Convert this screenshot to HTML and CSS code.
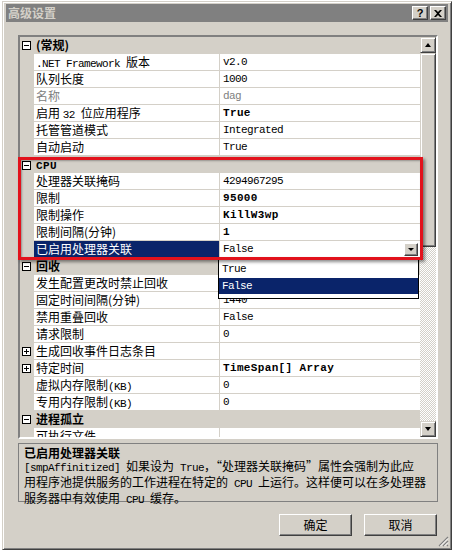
FILE: index.html
```html
<!DOCTYPE html>
<html lang="zh-CN">
<head>
<meta charset="utf-8">
<title>高级设置</title>
<link rel="stylesheet" href="styles.css">
</head>
<body>
<div class="window">
  <div class="titlebar">
    <span class="title">高级设置</span>
    <div class="tbtns">
      <span class="tbtn">?</span>
      <span class="tbtn"><svg width="8" height="7" viewBox="0 0 8 7"><path d="M0 0h2l2 2 2-2h2L5 3.5 8 7H6L4 5 2 7H0l3-3.5z" fill="#000"/></svg></span>
    </div>
  </div>
  <div class="content">
    <div class="grid">
      <div class="rows">
        <div class="row cat"><span class="mg"><span class="exp"></span></span><span class="cn">(常规)</span></div>
        <div class="row"><span class="mg"></span><span class="nm"><span class="m">.NET Framework </span>版本</span><span class="vl m">v2.0</span></div>
        <div class="row"><span class="mg"></span><span class="nm">队列长度</span><span class="vl m">1000</span></div>
        <div class="row dis"><span class="mg"></span><span class="nm">名称</span><span class="vl m">dag</span></div>
        <div class="row"><span class="mg"></span><span class="nm">启用 <span class="m">32 </span>位应用程序</span><span class="vl mb">True</span></div>
        <div class="row"><span class="mg"></span><span class="nm">托管管道模式</span><span class="vl m">Integrated</span></div>
        <div class="row"><span class="mg"></span><span class="nm">自动启动</span><span class="vl m">True</span></div>
        <div class="row cat"><span class="mg"><span class="exp"></span></span><span class="cn"><span class="mb">CPU</span></span></div>
        <div class="row"><span class="mg"></span><span class="nm">处理器关联掩码</span><span class="vl m">4294967295</span></div>
        <div class="row"><span class="mg"></span><span class="nm">限制</span><span class="vl mb">95000</span></div>
        <div class="row"><span class="mg"></span><span class="nm">限制操作</span><span class="vl mb">KillW3wp</span></div>
        <div class="row"><span class="mg"></span><span class="nm">限制间隔(分钟)</span><span class="vl mb">1</span></div>
        <div class="row sel"><span class="mg"></span><span class="nm">已启用处理器关联</span><span class="vl combo"><span class="m">False</span><span class="cbtn"><i class="tri-d"></i></span></span></div>
        <div class="row cat"><span class="mg"><span class="exp"></span></span><span class="cn">回收</span></div>
        <div class="row"><span class="mg"></span><span class="nm">发生配置更改时禁止回收</span><span class="vl m">False</span></div>
        <div class="row"><span class="mg"></span><span class="nm">固定时间间隔(分钟)</span><span class="vl m">1440</span></div>
        <div class="row"><span class="mg"></span><span class="nm">禁用重叠回收</span><span class="vl m">False</span></div>
        <div class="row"><span class="mg"></span><span class="nm">请求限制</span><span class="vl m">0</span></div>
        <div class="row"><span class="mg"><span class="exp plus"></span></span><span class="nm">生成回收事件日志条目</span><span class="vl m"></span></div>
        <div class="row"><span class="mg"><span class="exp plus"></span></span><span class="nm">特定时间</span><span class="vl mb">TimeSpan[] Array</span></div>
        <div class="row"><span class="mg"></span><span class="nm">虚拟内存限制<span class="m">(KB)</span></span><span class="vl m">0</span></div>
        <div class="row"><span class="mg"></span><span class="nm">专用内存限制<span class="m">(KB)</span></span><span class="vl m">0</span></div>
        <div class="row cat"><span class="mg"><span class="exp"></span></span><span class="cn">进程孤立</span></div>
        <div class="row"><span class="mg"></span><span class="nm">可执行文件</span><span class="vl m"></span></div>
      </div>
      <div class="vscroll">
        <span class="sbtn"><i class="tri-u"></i></span>
        <span class="thumb"></span>
        <span class="track"></span>
        <span class="sbtn"><i class="tri-d"></i></span>
      </div>
      <div class="dropdown">
        <div class="opt m">True</div>
        <div class="opt on m">False</div>
      </div>
      <div class="redbox"></div>
    </div>
    <div class="help">
      <div class="htitle">已启用处理器关联</div>
      <div class="htext"><span class="m">[smpAffinitized] </span>如果设为<span class="m"> True</span>，“处理器关联掩码”属性会强制为此应<br>用程序池提供服务的工作进程在特定的<span class="m"> CPU </span>上运行。这样便可以在多处理器<br>服务器中有效使用<span class="m"> CPU </span>缓存。</div>
    </div>
    <div class="buttons">
      <span class="btn">确定</span>
      <span class="btn">取消</span>
    </div>
  </div>
  <svg class="grip" width="11" height="11" viewBox="0 0 11 11">
    <path d="M10 1L1 10M10 5L5 10M10 9L9 10" stroke="#808080" stroke-width="1.2"/>
    <path d="M10 2.5L2.5 10M10 6.5L6.5 10" stroke="#fff" stroke-width="1"/>
  </svg>
</div>
</body>
</html>
```

FILE: styles.css
```css
* { box-sizing: border-box; }
html, body { margin: 0; padding: 0; background: #fff; }
body {
  font-family: "Noto Sans CJK SC", "Liberation Sans", sans-serif;
  font-size: 12px;
  color: #000;
}
.window {
  margin: 1px 0 0 2px;
  width: 450px;
  height: 549px;
  background: #d4d0c8;
  border: 1px solid;
  border-color: #d4d0c8 #404040 #404040 #d4d0c8;
  box-shadow: inset 1px 1px #fff, inset -1px -1px #808080;
  padding: 2px 3px 3px;
  display: flex;
  flex-direction: column;
  position: relative;
}
.titlebar {
  height: 18px;
  background: #808080;
  display: flex;
  align-items: center;
  justify-content: space-between;
  padding: 0 2px 0 2px;
}
.title {
  color: #d4d0c8;
  font-weight: bold;
  font-size: 12px;
  line-height: 16px;
}
.tbtns { display: flex; gap: 2px; }
.tbtn {
  width: 16px;
  height: 14px;
  background: #d4d0c8;
  border: 1px solid;
  border-color: #fff #404040 #404040 #fff;
  box-shadow: inset -1px -1px #808080;
  display: flex;
  align-items: center;
  justify-content: center;
  font-family: "Liberation Sans", sans-serif;
  font-weight: bold;
  font-size: 11px;
  line-height: 12px;
}
.content {
  padding: 13px 10px 0 12px;
  display: flex;
  flex-direction: column;
}
.grid {
  position: relative;
  width: 420px;
  height: 404px;
  border: 2px solid;
  border-color: #808080 #fff #fff #808080;
  box-shadow: inset 1px 1px #404040, inset -1px -1px #d4d0c8;
  display: flex;
  background: #d4d0c8;
}
.rows {
  width: 400px;
  height: 400px;
  overflow: hidden;
  background: #d4d0c8;
}
.row {
  display: grid;
  grid-template-columns: 14px 185px 201px;
  height: 17px;
  line-height: 16px;
  white-space: nowrap;
}
.mg { background: #d4d0c8; display: flex; align-items: center; padding-left: 2px; }
.nm, .vl {
  background: #fff;
  border-bottom: 1px solid #d4d0c8;
  overflow: hidden;
}
.nm { padding-left: 2px; }
.vl { border-left: 1px solid #d4d0c8; padding-left: 3px; }
.dis .nm, .dis .vl { color: #808080; }
.sel .nm { background: #0a246a; color: #fff; }
.combo { display: flex; align-items: center; justify-content: space-between; padding-right: 2px; }
.cbtn {
  width: 14px;
  height: 13px;
  background: #d4d0c8;
  border: 1px solid;
  border-color: #fff #404040 #404040 #fff;
  box-shadow: inset -1px -1px #808080;
  display: flex;
  align-items: center;
  justify-content: center;
}
.cat { background: #d4d0c8; }
.cat .cn {
  grid-column: 2 / 4;
  font-weight: bold;
  padding-left: 2px;
  border-bottom: 1px solid #d4d0c8;
}
.exp {
  position: relative;
  width: 9px;
  height: 9px;
  border: 1px solid #000;
  background: #fff;
}
.exp::before {
  content: "";
  position: absolute;
  left: 1px;
  top: 3px;
  width: 5px;
  height: 1px;
  background: #000;
}
.exp.plus::after {
  content: "";
  position: absolute;
  left: 3px;
  top: 1px;
  width: 1px;
  height: 5px;
  background: #000;
}
.m {
  font-family: "Liberation Mono", monospace;
  font-size: 11px;
  letter-spacing: -0.6px;
}
.mb {
  font-family: "Liberation Mono", monospace;
  font-size: 11px;
  font-weight: bold;
  letter-spacing: 0.35px;
}
.vscroll {
  width: 16px;
  height: 400px;
  display: flex;
  flex-direction: column;
}
.sbtn, .thumb {
  background: #d4d0c8;
  border: 1px solid;
  border-color: #d4d0c8 #404040 #404040 #d4d0c8;
  box-shadow: inset 1px 1px #fff, inset -1px -1px #808080;
}
.sbtn {
  height: 16px;
  display: flex;
  align-items: center;
  justify-content: center;
}
.thumb { height: 194px; }
.track {
  flex: 1;
  background-image: repeating-conic-gradient(#fff 0 25%, #d4d0c8 0 50%);
  background-size: 2px 2px;
}
.tri-u, .tri-d {
  width: 0;
  height: 0;
  border-left: 3.5px solid transparent;
  border-right: 3.5px solid transparent;
}
.tri-u { border-bottom: 4px solid #000; }
.tri-d { border-top: 4px solid #000; }
.cbtn .tri-d { border-left-width: 3px; border-right-width: 3px; border-top-width: 3px; }
.dropdown {
  position: absolute;
  left: 198px;
  top: 222px;
  width: 201px;
  height: 40px;
  background: #fff;
  border: 1px solid #000;
  padding-top: 1px;
  z-index: 2;
}
.opt {
  height: 16px;
  line-height: 16px;
  padding-left: 3px;
  margin-bottom: 1px;
}
.opt.on { background: #0a246a; color: #fff; }
.redbox {
  position: absolute;
  left: -2px;
  top: 120px;
  width: 405px;
  height: 103px;
  border: 3px solid #e2121c;
  box-shadow: 2px 2px 3px rgba(0, 0, 0, 0.45), inset 1px 1px 2px rgba(0, 0, 0, 0.3);
  z-index: 3;
}
.help {
  margin-top: 4px;
  width: 420px;
  height: 59px;
  border: 1px solid #808080;
  padding: 2px 5px 0;
  line-height: 13px;
  white-space: nowrap;
}
.htitle { font-weight: bold; }
.buttons {
  margin-top: 12px;
  display: flex;
  justify-content: flex-end;
  gap: 12px;
  padding-right: 1px;
}
.btn {
  width: 73px;
  height: 22px;
  background: #d4d0c8;
  border: 1px solid;
  border-color: #fff #404040 #404040 #fff;
  box-shadow: inset -1px -1px #808080;
  display: flex;
  align-items: center;
  justify-content: center;
  line-height: 14px;
}
.grip {
  position: absolute;
  right: 2px;
  bottom: 2px;
}
```
